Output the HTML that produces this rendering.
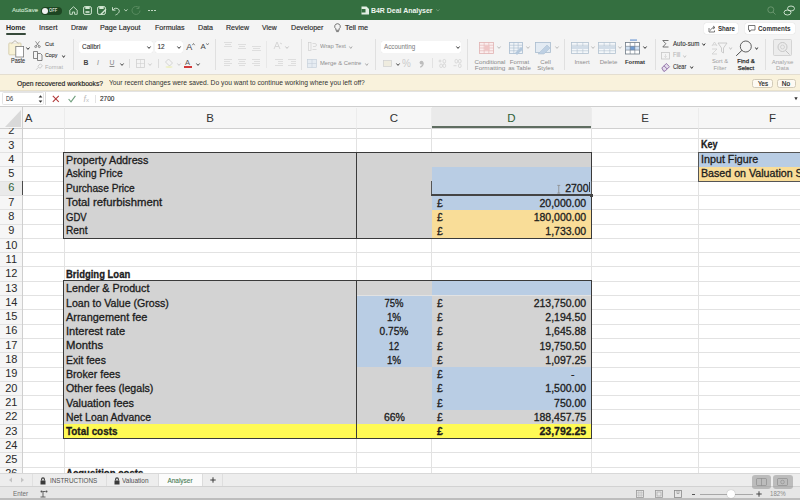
<!DOCTYPE html><html><head><meta charset="utf-8"><style>
*{margin:0;padding:0;box-sizing:border-box}
html,body{width:800px;height:500px;overflow:hidden}
body{position:relative;font-family:"Liberation Sans",sans-serif;background:#fff}
.a{position:absolute;white-space:nowrap}
svg.a{overflow:visible}
</style></head><body>
<div class="a" style="left:0.00px;top:106.00px;width:800.00px;height:394.00px;background:#fff;"></div>
<div class="a" style="left:0.00px;top:106.00px;width:800.00px;height:22.00px;background:#f6f6f6;"></div>
<div class="a" style="left:0.00px;top:128.00px;width:22.00px;height:345.00px;background:#f6f6f6;"></div>
<div class="a" style="left:431.60px;top:106.50px;width:159.60px;height:21.50px;background:#eaeaea;"></div>
<div class="a" style="left:431.60px;top:126.20px;width:159.60px;height:1.80px;background:#5f6d61;"></div>
<div class="a" style="left:0.00px;top:181.10px;width:22.00px;height:14.30px;background:#eaeaea;"></div>
<div class="a" style="left:0.00px;top:137.70px;width:800.00px;height:1.00px;background:#e2e2e2;"></div>
<div class="a" style="left:0.00px;top:152.00px;width:800.00px;height:1.00px;background:#e2e2e2;"></div>
<div class="a" style="left:0.00px;top:166.30px;width:800.00px;height:1.00px;background:#e2e2e2;"></div>
<div class="a" style="left:0.00px;top:180.60px;width:800.00px;height:1.00px;background:#e2e2e2;"></div>
<div class="a" style="left:0.00px;top:194.90px;width:800.00px;height:1.00px;background:#e2e2e2;"></div>
<div class="a" style="left:0.00px;top:209.20px;width:800.00px;height:1.00px;background:#e2e2e2;"></div>
<div class="a" style="left:0.00px;top:223.50px;width:800.00px;height:1.00px;background:#e2e2e2;"></div>
<div class="a" style="left:0.00px;top:237.80px;width:800.00px;height:1.00px;background:#e2e2e2;"></div>
<div class="a" style="left:0.00px;top:252.10px;width:800.00px;height:1.00px;background:#e2e2e2;"></div>
<div class="a" style="left:0.00px;top:266.40px;width:800.00px;height:1.00px;background:#e2e2e2;"></div>
<div class="a" style="left:0.00px;top:280.70px;width:800.00px;height:1.00px;background:#e2e2e2;"></div>
<div class="a" style="left:0.00px;top:295.00px;width:800.00px;height:1.00px;background:#e2e2e2;"></div>
<div class="a" style="left:0.00px;top:309.30px;width:800.00px;height:1.00px;background:#e2e2e2;"></div>
<div class="a" style="left:0.00px;top:323.60px;width:800.00px;height:1.00px;background:#e2e2e2;"></div>
<div class="a" style="left:0.00px;top:337.90px;width:800.00px;height:1.00px;background:#e2e2e2;"></div>
<div class="a" style="left:0.00px;top:352.20px;width:800.00px;height:1.00px;background:#e2e2e2;"></div>
<div class="a" style="left:0.00px;top:366.50px;width:800.00px;height:1.00px;background:#e2e2e2;"></div>
<div class="a" style="left:0.00px;top:380.80px;width:800.00px;height:1.00px;background:#e2e2e2;"></div>
<div class="a" style="left:0.00px;top:395.10px;width:800.00px;height:1.00px;background:#e2e2e2;"></div>
<div class="a" style="left:0.00px;top:409.40px;width:800.00px;height:1.00px;background:#e2e2e2;"></div>
<div class="a" style="left:0.00px;top:423.70px;width:800.00px;height:1.00px;background:#e2e2e2;"></div>
<div class="a" style="left:0.00px;top:438.00px;width:800.00px;height:1.00px;background:#e2e2e2;"></div>
<div class="a" style="left:0.00px;top:452.30px;width:800.00px;height:1.00px;background:#e2e2e2;"></div>
<div class="a" style="left:0.00px;top:466.60px;width:800.00px;height:1.00px;background:#e2e2e2;"></div>
<div class="a" style="left:0.00px;top:127.50px;width:800.00px;height:1.00px;background:#d0d0d0;"></div>
<div class="a" style="left:63.50px;top:128.00px;width:1.00px;height:345.00px;background:#e2e2e2;"></div>
<div class="a" style="left:63.50px;top:108.00px;width:1.00px;height:20.00px;background:#ececec;"></div>
<div class="a" style="left:355.90px;top:128.00px;width:1.00px;height:345.00px;background:#e2e2e2;"></div>
<div class="a" style="left:355.90px;top:108.00px;width:1.00px;height:20.00px;background:#ececec;"></div>
<div class="a" style="left:431.10px;top:128.00px;width:1.00px;height:345.00px;background:#e2e2e2;"></div>
<div class="a" style="left:431.10px;top:108.00px;width:1.00px;height:20.00px;background:#ececec;"></div>
<div class="a" style="left:590.70px;top:128.00px;width:1.00px;height:345.00px;background:#e2e2e2;"></div>
<div class="a" style="left:590.70px;top:108.00px;width:1.00px;height:20.00px;background:#ececec;"></div>
<div class="a" style="left:698.30px;top:128.00px;width:1.00px;height:345.00px;background:#e2e2e2;"></div>
<div class="a" style="left:698.30px;top:108.00px;width:1.00px;height:20.00px;background:#ececec;"></div>
<div class="a" style="left:21.50px;top:106.00px;width:1.00px;height:367.00px;background:#cfcfcf;"></div>
<div class="a" style="left:21.50px;top:181.10px;width:1.50px;height:14.30px;background:#4a4a4a;"></div>
<svg class="a" style="left:0px;top:106px;" width="22" height="22" viewBox="0 0 22 22"><polygon points="5,21 21,21 21,4" fill="#d6d6d6"/></svg>
<div class="a" style="left:-171.50px;width:400px;text-align:center;top:112.67px;font-size:11.5px;line-height:11.5px;font-weight:400;color:#333;">A</div>
<div class="a" style="left:10.20px;width:400px;text-align:center;top:112.67px;font-size:11.5px;line-height:11.5px;font-weight:400;color:#333;">B</div>
<div class="a" style="left:194.00px;width:400px;text-align:center;top:112.67px;font-size:11.5px;line-height:11.5px;font-weight:400;color:#333;">C</div>
<div class="a" style="left:311.40px;width:400px;text-align:center;top:112.67px;font-size:11.5px;line-height:11.5px;font-weight:400;color:#2f5f37;">D</div>
<div class="a" style="left:445.00px;width:400px;text-align:center;top:112.67px;font-size:11.5px;line-height:11.5px;font-weight:400;color:#333;">E</div>
<div class="a" style="left:572.50px;width:400px;text-align:center;top:112.67px;font-size:11.5px;line-height:11.5px;font-weight:400;color:#333;">F</div>
<div class="a" style="left:-188.70px;width:400px;text-align:center;top:125.29px;font-size:11px;line-height:11px;font-weight:400;color:#2a2a2a;">2</div>
<div class="a" style="left:-188.70px;width:400px;text-align:center;top:139.59px;font-size:11px;line-height:11px;font-weight:400;color:#2a2a2a;">3</div>
<div class="a" style="left:-188.70px;width:400px;text-align:center;top:153.89px;font-size:11px;line-height:11px;font-weight:400;color:#2a2a2a;">4</div>
<div class="a" style="left:-188.70px;width:400px;text-align:center;top:168.19px;font-size:11px;line-height:11px;font-weight:400;color:#2a2a2a;">5</div>
<div class="a" style="left:-188.70px;width:400px;text-align:center;top:182.49px;font-size:11px;line-height:11px;font-weight:400;color:#2f5f37;">6</div>
<div class="a" style="left:-188.70px;width:400px;text-align:center;top:196.79px;font-size:11px;line-height:11px;font-weight:400;color:#2a2a2a;">7</div>
<div class="a" style="left:-188.70px;width:400px;text-align:center;top:211.09px;font-size:11px;line-height:11px;font-weight:400;color:#2a2a2a;">8</div>
<div class="a" style="left:-188.70px;width:400px;text-align:center;top:225.39px;font-size:11px;line-height:11px;font-weight:400;color:#2a2a2a;">9</div>
<div class="a" style="left:-188.70px;width:400px;text-align:center;top:239.69px;font-size:11px;line-height:11px;font-weight:400;color:#2a2a2a;">10</div>
<div class="a" style="left:-188.70px;width:400px;text-align:center;top:253.99px;font-size:11px;line-height:11px;font-weight:400;color:#2a2a2a;">11</div>
<div class="a" style="left:-188.70px;width:400px;text-align:center;top:268.29px;font-size:11px;line-height:11px;font-weight:400;color:#2a2a2a;">12</div>
<div class="a" style="left:-188.70px;width:400px;text-align:center;top:282.59px;font-size:11px;line-height:11px;font-weight:400;color:#2a2a2a;">13</div>
<div class="a" style="left:-188.70px;width:400px;text-align:center;top:296.89px;font-size:11px;line-height:11px;font-weight:400;color:#2a2a2a;">14</div>
<div class="a" style="left:-188.70px;width:400px;text-align:center;top:311.19px;font-size:11px;line-height:11px;font-weight:400;color:#2a2a2a;">15</div>
<div class="a" style="left:-188.70px;width:400px;text-align:center;top:325.49px;font-size:11px;line-height:11px;font-weight:400;color:#2a2a2a;">16</div>
<div class="a" style="left:-188.70px;width:400px;text-align:center;top:339.79px;font-size:11px;line-height:11px;font-weight:400;color:#2a2a2a;">17</div>
<div class="a" style="left:-188.70px;width:400px;text-align:center;top:354.09px;font-size:11px;line-height:11px;font-weight:400;color:#2a2a2a;">18</div>
<div class="a" style="left:-188.70px;width:400px;text-align:center;top:368.39px;font-size:11px;line-height:11px;font-weight:400;color:#2a2a2a;">19</div>
<div class="a" style="left:-188.70px;width:400px;text-align:center;top:382.69px;font-size:11px;line-height:11px;font-weight:400;color:#2a2a2a;">20</div>
<div class="a" style="left:-188.70px;width:400px;text-align:center;top:396.99px;font-size:11px;line-height:11px;font-weight:400;color:#2a2a2a;">21</div>
<div class="a" style="left:-188.70px;width:400px;text-align:center;top:411.29px;font-size:11px;line-height:11px;font-weight:400;color:#2a2a2a;">22</div>
<div class="a" style="left:-188.70px;width:400px;text-align:center;top:425.59px;font-size:11px;line-height:11px;font-weight:400;color:#2a2a2a;">23</div>
<div class="a" style="left:-188.70px;width:400px;text-align:center;top:439.89px;font-size:11px;line-height:11px;font-weight:400;color:#2a2a2a;">24</div>
<div class="a" style="left:-188.70px;width:400px;text-align:center;top:454.19px;font-size:11px;line-height:11px;font-weight:400;color:#2a2a2a;">25</div>
<div class="a" style="left:-188.70px;width:400px;text-align:center;top:468.49px;font-size:11px;line-height:11px;font-weight:400;color:#2a2a2a;">26</div>
<div class="a" style="left:0.00px;top:106.50px;width:21.50px;height:21.00px;background:#f6f6f6;"></div>
<svg class="a" style="left:0px;top:106px;" width="22" height="22" viewBox="0 0 22 22"><polygon points="5,21 21,21 21,4" fill="#d9d9d9"/></svg>
<div class="a" style="left:64.00px;top:152.50px;width:292.40px;height:85.80px;background:#d3d3d3;"></div>
<div class="a" style="left:356.40px;top:152.50px;width:75.20px;height:85.80px;background:#d3d3d3;"></div>
<div class="a" style="left:431.60px;top:152.50px;width:159.60px;height:14.30px;background:#d3d3d3;"></div>
<div class="a" style="left:431.60px;top:166.80px;width:159.60px;height:42.90px;background:#b9cde4;"></div>
<div class="a" style="left:431.60px;top:209.70px;width:159.60px;height:28.60px;background:#f9dd98;"></div>
<div class="a" style="left:64.00px;top:281.20px;width:292.40px;height:143.00px;background:#d3d3d3;"></div>
<div class="a" style="left:356.40px;top:281.20px;width:75.20px;height:14.30px;background:#d3d3d3;"></div>
<div class="a" style="left:356.40px;top:295.50px;width:75.20px;height:71.50px;background:#b9cde4;"></div>
<div class="a" style="left:356.40px;top:367.00px;width:75.20px;height:57.20px;background:#d3d3d3;"></div>
<div class="a" style="left:431.60px;top:281.20px;width:159.60px;height:14.30px;background:#b9cde4;"></div>
<div class="a" style="left:431.60px;top:295.50px;width:159.60px;height:71.50px;background:#d3d3d3;"></div>
<div class="a" style="left:431.60px;top:367.00px;width:159.60px;height:42.90px;background:#b9cde4;"></div>
<div class="a" style="left:431.60px;top:409.90px;width:159.60px;height:14.30px;background:#d3d3d3;"></div>
<div class="a" style="left:64.00px;top:424.20px;width:292.40px;height:14.30px;background:#fffa55;"></div>
<div class="a" style="left:356.40px;top:424.20px;width:75.20px;height:14.30px;background:#fffa55;"></div>
<div class="a" style="left:431.60px;top:424.20px;width:159.60px;height:14.30px;background:#fffa55;"></div>
<div class="a" style="left:698.80px;top:152.50px;width:101.20px;height:14.30px;background:#b9cde4;"></div>
<div class="a" style="left:698.80px;top:166.80px;width:101.20px;height:14.30px;background:#f9dd98;"></div>
<div class="a" style="left:63.25px;top:151.75px;width:528.70px;height:87.30px;border:1.5px solid #3a3a3a"></div>
<div class="a" style="left:355.65px;top:152.50px;width:1.50px;height:85.80px;background:#3a3a3a;"></div>
<div class="a" style="left:63.25px;top:280.45px;width:528.70px;height:158.80px;border:1.5px solid #3a3a3a"></div>
<div class="a" style="left:355.65px;top:281.20px;width:1.50px;height:157.30px;background:#3a3a3a;"></div>
<div class="a" style="left:698.20px;top:151.90px;width:122.40px;height:29.80px;border:1.2px solid #555"></div>
<div class="a" style="left:431.30px;top:181.10px;width:1.10px;height:14.30px;background:#555;"></div>
<div class="a" style="left:431.10px;top:194.40px;width:161.10px;height:2.00px;background:#444;"></div>
<div class="a" style="left:590.90px;top:181.10px;width:1.10px;height:14.30px;background:#555;"></div>
<div class="a" style="left:590.20px;top:194.40px;width:3.00px;height:3.00px;background:#444;"></div>
<div class="a" style="left:700.70px;top:138.51px;font-size:10.5px;line-height:10.5px;font-weight:700;color:#1c1c1c;transform:scaleX(0.8650);transform-origin:left;-webkit-text-stroke:0.3px #1c1c1c;">Key</div>
<div class="a" style="left:700.70px;top:154.31px;font-size:10.5px;line-height:10.5px;font-weight:400;color:#1c1c1c;transform:scaleX(1.0215);transform-origin:left;-webkit-text-stroke:0.3px #1c1c1c;">Input Figure</div>
<div class="a" style="left:700.70px;top:167.61px;font-size:10.5px;line-height:10.5px;font-weight:400;color:#1c1c1c;transform:scaleX(1.015);transform-origin:left;-webkit-text-stroke:0.3px #1c1c1c;">Based on Valuation Survey</div>
<div class="a" style="left:66.30px;top:154.81px;font-size:10.5px;line-height:10.5px;font-weight:400;color:#1c1c1c;transform:scaleX(1.0226);transform-origin:left;-webkit-text-stroke:0.3px #1c1c1c;">Property Address</div>
<div class="a" style="left:66.30px;top:167.71px;font-size:10.5px;line-height:10.5px;font-weight:400;color:#1c1c1c;transform:scaleX(0.9690);transform-origin:left;-webkit-text-stroke:0.3px #1c1c1c;">Asking Price</div>
<div class="a" style="left:66.30px;top:183.11px;font-size:10.5px;line-height:10.5px;font-weight:400;color:#1c1c1c;transform:scaleX(0.9655);transform-origin:left;-webkit-text-stroke:0.3px #1c1c1c;">Purchase Price</div>
<div class="a" style="left:66.30px;top:197.41px;font-size:10.5px;line-height:10.5px;font-weight:400;color:#1c1c1c;transform:scaleX(1.0764);transform-origin:left;-webkit-text-stroke:0.3px #1c1c1c;">Total refurbishment</div>
<div class="a" style="left:66.30px;top:211.71px;font-size:10.5px;line-height:10.5px;font-weight:400;color:#1c1c1c;transform:scaleX(0.9099);transform-origin:left;-webkit-text-stroke:0.3px #1c1c1c;">GDV</div>
<div class="a" style="left:66.30px;top:224.91px;font-size:10.5px;line-height:10.5px;font-weight:400;color:#1c1c1c;transform:scaleX(0.9703);transform-origin:left;-webkit-text-stroke:0.3px #1c1c1c;">Rent</div>
<div class="a" style="right:211.50px;top:183.11px;font-size:10.5px;line-height:10.5px;font-weight:400;color:#1c1c1c;-webkit-text-stroke:0.3px #1c1c1c;">2700</div>
<div class="a" style="left:588.60px;top:181.80px;width:0.90px;height:10.40px;background:#444;"></div>
<svg class="a" style="left:556.5px;top:185px;" width="3.5" height="8.5" viewBox="0 0 3.5 8.5"><path d="M0.3 0.4h2.9M1.75 0.4v7.7M0.3 8.1h2.9" stroke="#8a8a8a" stroke-width="0.8" fill="none"/></svg>
<div class="a" style="left:437.00px;top:197.51px;font-size:10.5px;line-height:10.5px;font-weight:400;color:#1c1c1c;-webkit-text-stroke:0.3px #1c1c1c;">£</div>
<div class="a" style="right:213.80px;top:197.51px;font-size:10.5px;line-height:10.5px;font-weight:400;color:#1c1c1c;-webkit-text-stroke:0.3px #1c1c1c;">20,000.00</div>
<div class="a" style="left:437.00px;top:211.81px;font-size:10.5px;line-height:10.5px;font-weight:400;color:#1c1c1c;-webkit-text-stroke:0.3px #1c1c1c;">£</div>
<div class="a" style="right:213.80px;top:211.81px;font-size:10.5px;line-height:10.5px;font-weight:400;color:#1c1c1c;-webkit-text-stroke:0.3px #1c1c1c;">180,000.00</div>
<div class="a" style="left:437.00px;top:226.11px;font-size:10.5px;line-height:10.5px;font-weight:400;color:#1c1c1c;-webkit-text-stroke:0.3px #1c1c1c;">£</div>
<div class="a" style="right:213.80px;top:226.11px;font-size:10.5px;line-height:10.5px;font-weight:400;color:#1c1c1c;-webkit-text-stroke:0.3px #1c1c1c;">1,733.00</div>
<div class="a" style="left:66.30px;top:268.91px;font-size:10.5px;line-height:10.5px;font-weight:700;color:#1c1c1c;transform:scaleX(0.9019);transform-origin:left;-webkit-text-stroke:0.3px #1c1c1c;">Bridging Loan</div>
<div class="a" style="left:66.30px;top:283.21px;font-size:10.5px;line-height:10.5px;font-weight:400;color:#1c1c1c;transform:scaleX(1.0208);transform-origin:left;-webkit-text-stroke:0.3px #1c1c1c;">Lender &amp; Product</div>
<div class="a" style="left:66.30px;top:297.51px;font-size:10.5px;line-height:10.5px;font-weight:400;color:#1c1c1c;transform:scaleX(1.0094);transform-origin:left;-webkit-text-stroke:0.3px #1c1c1c;">Loan to Value (Gross)</div>
<div class="a" style="left:194.40px;width:400px;text-align:center;top:297.61px;font-size:10.5px;line-height:10.5px;font-weight:400;color:#1c1c1c;transform:scaleX(0.9043);transform-origin:center;-webkit-text-stroke:0.3px #1c1c1c;">75%</div>
<div class="a" style="left:437.00px;top:297.61px;font-size:10.5px;line-height:10.5px;font-weight:400;color:#1c1c1c;-webkit-text-stroke:0.3px #1c1c1c;">£</div>
<div class="a" style="right:213.80px;top:297.61px;font-size:10.5px;line-height:10.5px;font-weight:400;color:#1c1c1c;-webkit-text-stroke:0.3px #1c1c1c;">213,750.00</div>
<div class="a" style="left:66.30px;top:311.81px;font-size:10.5px;line-height:10.5px;font-weight:400;color:#1c1c1c;transform:scaleX(1.0412);transform-origin:left;-webkit-text-stroke:0.3px #1c1c1c;">Arrangement fee</div>
<div class="a" style="left:194.40px;width:400px;text-align:center;top:311.91px;font-size:10.5px;line-height:10.5px;font-weight:400;color:#1c1c1c;transform:scaleX(0.9367);transform-origin:center;-webkit-text-stroke:0.3px #1c1c1c;">1%</div>
<div class="a" style="left:437.00px;top:311.91px;font-size:10.5px;line-height:10.5px;font-weight:400;color:#1c1c1c;-webkit-text-stroke:0.3px #1c1c1c;">£</div>
<div class="a" style="right:213.80px;top:311.91px;font-size:10.5px;line-height:10.5px;font-weight:400;color:#1c1c1c;-webkit-text-stroke:0.3px #1c1c1c;">2,194.50</div>
<div class="a" style="left:66.30px;top:326.11px;font-size:10.5px;line-height:10.5px;font-weight:400;color:#1c1c1c;transform:scaleX(1.0536);transform-origin:left;-webkit-text-stroke:0.3px #1c1c1c;">Interest rate</div>
<div class="a" style="left:194.40px;width:400px;text-align:center;top:326.21px;font-size:10.5px;line-height:10.5px;font-weight:400;color:#1c1c1c;transform:scaleX(0.9682);transform-origin:center;-webkit-text-stroke:0.3px #1c1c1c;">0.75%</div>
<div class="a" style="left:437.00px;top:326.21px;font-size:10.5px;line-height:10.5px;font-weight:400;color:#1c1c1c;-webkit-text-stroke:0.3px #1c1c1c;">£</div>
<div class="a" style="right:213.80px;top:326.21px;font-size:10.5px;line-height:10.5px;font-weight:400;color:#1c1c1c;-webkit-text-stroke:0.3px #1c1c1c;">1,645.88</div>
<div class="a" style="left:66.30px;top:340.41px;font-size:10.5px;line-height:10.5px;font-weight:400;color:#1c1c1c;transform:scaleX(1.0766);transform-origin:left;-webkit-text-stroke:0.3px #1c1c1c;">Months</div>
<div class="a" style="left:194.40px;width:400px;text-align:center;top:340.51px;font-size:10.5px;line-height:10.5px;font-weight:400;color:#1c1c1c;transform:scaleX(0.8784);transform-origin:center;-webkit-text-stroke:0.3px #1c1c1c;">12</div>
<div class="a" style="left:437.00px;top:340.51px;font-size:10.5px;line-height:10.5px;font-weight:400;color:#1c1c1c;-webkit-text-stroke:0.3px #1c1c1c;">£</div>
<div class="a" style="right:213.80px;top:340.51px;font-size:10.5px;line-height:10.5px;font-weight:400;color:#1c1c1c;-webkit-text-stroke:0.3px #1c1c1c;">19,750.50</div>
<div class="a" style="left:66.30px;top:354.71px;font-size:10.5px;line-height:10.5px;font-weight:400;color:#1c1c1c;transform:scaleX(0.9896);transform-origin:left;-webkit-text-stroke:0.3px #1c1c1c;">Exit fees</div>
<div class="a" style="left:194.40px;width:400px;text-align:center;top:354.81px;font-size:10.5px;line-height:10.5px;font-weight:400;color:#1c1c1c;transform:scaleX(0.9367);transform-origin:center;-webkit-text-stroke:0.3px #1c1c1c;">1%</div>
<div class="a" style="left:437.00px;top:354.81px;font-size:10.5px;line-height:10.5px;font-weight:400;color:#1c1c1c;-webkit-text-stroke:0.3px #1c1c1c;">£</div>
<div class="a" style="right:213.80px;top:354.81px;font-size:10.5px;line-height:10.5px;font-weight:400;color:#1c1c1c;-webkit-text-stroke:0.3px #1c1c1c;">1,097.25</div>
<div class="a" style="left:66.30px;top:369.01px;font-size:10.5px;line-height:10.5px;font-weight:400;color:#1c1c1c;transform:scaleX(1.0105);transform-origin:left;-webkit-text-stroke:0.3px #1c1c1c;">Broker fees</div>
<div class="a" style="left:437.00px;top:369.11px;font-size:10.5px;line-height:10.5px;font-weight:400;color:#1c1c1c;-webkit-text-stroke:0.3px #1c1c1c;">£</div>
<div class="a" style="right:225.50px;top:369.11px;font-size:10.5px;line-height:10.5px;font-weight:400;color:#1c1c1c;-webkit-text-stroke:0.3px #1c1c1c;">-</div>
<div class="a" style="left:66.30px;top:383.31px;font-size:10.5px;line-height:10.5px;font-weight:400;color:#1c1c1c;transform:scaleX(1.0120);transform-origin:left;-webkit-text-stroke:0.3px #1c1c1c;">Other fees (legals)</div>
<div class="a" style="left:437.00px;top:383.41px;font-size:10.5px;line-height:10.5px;font-weight:400;color:#1c1c1c;-webkit-text-stroke:0.3px #1c1c1c;">£</div>
<div class="a" style="right:213.80px;top:383.41px;font-size:10.5px;line-height:10.5px;font-weight:400;color:#1c1c1c;-webkit-text-stroke:0.3px #1c1c1c;">1,500.00</div>
<div class="a" style="left:66.30px;top:397.61px;font-size:10.5px;line-height:10.5px;font-weight:400;color:#1c1c1c;transform:scaleX(1.0348);transform-origin:left;-webkit-text-stroke:0.3px #1c1c1c;">Valuation fees</div>
<div class="a" style="left:437.00px;top:397.71px;font-size:10.5px;line-height:10.5px;font-weight:400;color:#1c1c1c;-webkit-text-stroke:0.3px #1c1c1c;">£</div>
<div class="a" style="right:213.80px;top:397.71px;font-size:10.5px;line-height:10.5px;font-weight:400;color:#1c1c1c;-webkit-text-stroke:0.3px #1c1c1c;">750.00</div>
<div class="a" style="left:66.30px;top:411.91px;font-size:10.5px;line-height:10.5px;font-weight:400;color:#1c1c1c;transform:scaleX(0.9913);transform-origin:left;-webkit-text-stroke:0.3px #1c1c1c;">Net Loan Advance</div>
<div class="a" style="left:194.40px;width:400px;text-align:center;top:412.01px;font-size:10.5px;line-height:10.5px;font-weight:400;color:#1c1c1c;-webkit-text-stroke:0.3px #1c1c1c;">66%</div>
<div class="a" style="left:437.00px;top:412.01px;font-size:10.5px;line-height:10.5px;font-weight:400;color:#1c1c1c;-webkit-text-stroke:0.3px #1c1c1c;">£</div>
<div class="a" style="right:213.80px;top:412.01px;font-size:10.5px;line-height:10.5px;font-weight:400;color:#1c1c1c;-webkit-text-stroke:0.3px #1c1c1c;">188,457.75</div>
<div class="a" style="left:66.30px;top:426.21px;font-size:10.5px;line-height:10.5px;font-weight:700;color:#1c1c1c;transform:scaleX(0.9415);transform-origin:left;-webkit-text-stroke:0.3px #1c1c1c;">Total costs</div>
<div class="a" style="left:437.00px;top:426.31px;font-size:10.5px;line-height:10.5px;font-weight:700;color:#1c1c1c;-webkit-text-stroke:0.3px #1c1c1c;">£</div>
<div class="a" style="right:213.80px;top:426.31px;font-size:10.5px;line-height:10.5px;font-weight:700;color:#1c1c1c;-webkit-text-stroke:0.3px #1c1c1c;">23,792.25</div>
<div class="a" style="left:66.30px;top:468.31px;font-size:10.5px;line-height:10.5px;font-weight:700;color:#1c1c1c;transform:scaleX(0.9132);transform-origin:left;-webkit-text-stroke:0.3px #1c1c1c;">Acqusition costs</div>
<div class="a" style="left:0.00px;top:473.00px;width:800.00px;height:13.80px;background:#ededed;"></div>
<div class="a" style="left:0.00px;top:473.00px;width:800.00px;height:0.70px;background:#d8d8d8;"></div>
<div class="a" style="left:0.00px;top:486.80px;width:800.00px;height:13.20px;background:#e6e6e6;"></div>
<div class="a" style="left:0.00px;top:486.30px;width:800.00px;height:0.90px;background:#d2d2d2;"></div>
<div class="a" style="left:0.00px;top:497.50px;width:800.00px;height:2.50px;background:#bdbdbd;"></div>
<svg class="a" style="left:8px;top:477px;" width="5" height="6" viewBox="0 0 5 6"><path d="M4 0.5L1 3l3 2.5z" fill="#c4c4c4"/></svg>
<svg class="a" style="left:19.5px;top:477px;" width="5" height="6" viewBox="0 0 5 6"><path d="M1 0.5L4 3 1 5.5z" fill="#c4c4c4"/></svg>
<div class="a" style="left:32.00px;top:474.00px;width:0.80px;height:12.00px;background:#e0e0e0;"></div>
<svg class="a" style="left:39.5px;top:476.5px;" width="6" height="8" viewBox="0 0 6 8"><path d="M1.6 3.6V2.3a1.4 1.4 0 0 1 2.8 0V3.6" stroke="#3a3a3a" stroke-width="1.1" fill="none"/><rect x="0.5" y="3.5" width="5" height="4" fill="#3a3a3a"/></svg>
<div class="a" style="left:49.50px;top:477.67px;font-size:6.3px;line-height:6.3px;font-weight:400;color:#505050;transform:scaleX(0.9994);transform-origin:left;">INSTRUCTIONS</div>
<div class="a" style="left:106.00px;top:474.00px;width:0.80px;height:12.00px;background:#dedede;"></div>
<svg class="a" style="left:113.5px;top:476.5px;" width="6" height="8" viewBox="0 0 6 8"><path d="M1.6 3.6V2.3a1.4 1.4 0 0 1 2.8 0V3.6" stroke="#3a3a3a" stroke-width="1.1" fill="none"/><rect x="0.5" y="3.5" width="5" height="4" fill="#3a3a3a"/></svg>
<div class="a" style="left:122.00px;top:477.67px;font-size:6.3px;line-height:6.3px;font-weight:400;color:#505050;transform:scaleX(1.0271);transform-origin:left;">Valuation</div>
<div class="a" style="left:158.50px;top:473.50px;width:43.00px;height:12.50px;background:#fbfbfb;"></div>
<div class="a" style="left:157.50px;top:474.00px;width:0.80px;height:12.00px;background:#dcdcdc;"></div>
<div class="a" style="left:201.50px;top:474.00px;width:0.80px;height:12.00px;background:#dcdcdc;"></div>
<div class="a" style="left:-19.70px;width:400px;text-align:center;top:477.50px;font-size:6.5px;line-height:6.5px;font-weight:400;color:#4a7c54;transform:scaleX(0.9952);transform-origin:center;-webkit-text-stroke:0.1px #4a7c54;">Analyser</div>
<div class="a" style="left:221.80px;top:474.00px;width:0.80px;height:12.00px;background:#dedede;"></div>
<svg class="a" style="left:209.5px;top:476.5px;" width="6" height="6" viewBox="0 0 6 6"><path d="M3 0.3v5.4M0.3 3h5.4" stroke="#3a3a3a" stroke-width="1"/></svg>
<div class="a" style="left:13.00px;top:490.97px;font-size:6.3px;line-height:6.3px;font-weight:400;color:#6e6e6e;transform:scaleX(1.0031);transform-origin:left;">Enter</div>
<svg class="a" style="left:39.5px;top:489.5px;" width="8" height="8" viewBox="0 0 8 8"><circle cx="1.5" cy="1.5" r="1" fill="#555"/><circle cx="6.5" cy="1.5" r="1" fill="#555"/><path d="M2.5 1.5h3M3 1.5v5.5M0.5 7h5" stroke="#555" stroke-width="0.9" fill="none"/></svg>
<svg class="a" style="left:636px;top:489.5px;" width="8" height="8" viewBox="0 0 8 8"><rect x="0.5" y="0.5" width="7" height="7" fill="none" stroke="#9a9a9a" stroke-width="0.8"/><path d="M0.5 2.8h7M0.5 5.2h7M2.8 0.5v7M5.2 0.5v7" stroke="#b0b0b0" stroke-width="0.5"/></svg>
<svg class="a" style="left:655px;top:489.5px;" width="8" height="8" viewBox="0 0 8 8"><rect x="0.5" y="0.5" width="7" height="7" fill="none" stroke="#9a9a9a" stroke-width="0.8"/><rect x="2" y="2" width="4" height="4" fill="none" stroke="#a0a0a0" stroke-width="0.6"/></svg>
<svg class="a" style="left:674px;top:489.5px;" width="8" height="8" viewBox="0 0 8 8"><rect x="0.5" y="0.5" width="7" height="7" fill="none" stroke="#8a8a8a" stroke-width="0.8"/><path d="M3 0.5v3h2v-3" stroke="#8a8a8a" stroke-width="0.6" fill="none"/></svg>
<div class="a" style="left:691.50px;top:493.60px;width:3.50px;height:1.00px;background:#555;"></div>
<div class="a" style="left:700.00px;top:493.50px;width:53.00px;height:1.30px;background:#a8a8a8;"></div>
<div class="a" style="left:727px;top:490px;width:8px;height:8px;border-radius:50%;background:#fff;box-shadow:0 0 1px #999"></div>
<svg class="a" style="left:755.5px;top:491px;" width="6" height="6" viewBox="0 0 6 6"><path d="M3 0.3v5.4M0.3 3h5.4" stroke="#444" stroke-width="1"/></svg>
<div class="a" style="left:770.00px;top:490.67px;font-size:6.3px;line-height:6.3px;font-weight:400;color:#8a8a8a;transform:scaleX(0.9693);transform-origin:left;">182%</div>
<div class="a" style="left:751.50px;top:475.00px;width:19.50px;height:13.50px;background:rgba(140,140,140,0.5);border-radius:3px;"></div>
<div class="a" style="left:773.00px;top:475.00px;width:19.50px;height:13.50px;background:rgba(140,140,140,0.5);border-radius:3px;"></div>
<svg class="a" style="left:756px;top:478px;" width="11" height="8" viewBox="0 0 11 8"><rect x="0.5" y="0.5" width="10" height="7" rx="1" fill="none" stroke="rgba(120,120,120,0.6)" stroke-width="0.8"/><path d="M5.5 0.5v7" stroke="rgba(120,120,120,0.6)" stroke-width="0.8"/></svg>
<svg class="a" style="left:777px;top:478px;" width="11" height="8" viewBox="0 0 11 8"><rect x="0.5" y="0.5" width="10" height="7" rx="1" fill="none" stroke="rgba(120,120,120,0.6)" stroke-width="0.8"/><circle cx="5.5" cy="4" r="1.8" fill="none" stroke="rgba(120,120,120,0.6)" stroke-width="0.7"/></svg>
<div class="a" style="left:0.00px;top:90.80px;width:800.00px;height:15.20px;background:#fff;"></div>
<div class="a" style="left:0.00px;top:105.60px;width:800.00px;height:0.90px;background:#cfcfcf;"></div>
<div class="a" style="left:0.00px;top:90.80px;width:800.00px;height:0.60px;background:#e3e3e3;"></div>
<div class="a" style="left:44.60px;top:92.00px;width:0.80px;height:13.00px;background:#dadada;"></div>
<div class="a" style="left:1.5px;top:92px;width:42.5px;height:13px;border:0.8px solid #e4e4e4;border-radius:1.5px"></div>
<div class="a" style="left:6.00px;top:95.70px;font-size:6.5px;line-height:6.5px;font-weight:400;color:#333;transform:scaleX(0.8627);transform-origin:left;">D6</div>
<svg class="a" style="left:38px;top:94px;" width="5" height="10" viewBox="0 0 5 10"><path d="M0.6 3.4l1.9-2.2 1.9 2.2zM0.6 6.6l1.9 2.2 1.9-2.2z" fill="#333"/></svg>
<svg class="a" style="left:51.5px;top:95px;" width="8" height="8" viewBox="0 0 8 8"><path d="M0.8 0.8l6 6M6.8 0.8l-6 6" stroke="#b23a3a" stroke-width="1.1"/></svg>
<svg class="a" style="left:67.5px;top:95px;" width="8" height="8" viewBox="0 0 8 8"><path d="M0.6 4l2.4 2.8 4.4-6" stroke="#6f9f7d" stroke-width="1.1" fill="none"/></svg>
<div class="a" style="left:83.50px;top:94.80px;font-size:8.5px;line-height:8.5px;font-weight:400;color:#bdbdbd;font-family:"Liberation Serif",serif;"><i>f</i><span style="font-size:6px">x</span></div>
<div class="a" style="left:95.00px;top:94.50px;width:0.70px;height:8.50px;background:#e3e3e3;"></div>
<div class="a" style="left:99.80px;top:96.24px;font-size:6.8px;line-height:6.8px;font-weight:400;color:#222;transform:scaleX(0.9452);transform-origin:left;-webkit-text-stroke:0.1px #222;">2700</div>
<svg class="a" style="left:794px;top:97px;" width="4" height="3.5" viewBox="0 0 4 3.5"><path d="M0.3 0.3h3.4L2 3.2z" fill="#333"/></svg>
<div class="a" style="left:0.00px;top:74.50px;width:800.00px;height:16.30px;background:#f9f2dc;"></div>
<div class="a" style="left:0.00px;top:74.00px;width:800.00px;height:1.00px;background:#e4ded0;"></div>
<div class="a" style="left:0.00px;top:90.20px;width:800.00px;height:0.70px;background:#e8e1cc;"></div>
<div class="a" style="left:17.00px;top:80.50px;font-size:6.5px;line-height:6.5px;font-weight:400;color:#1e1e1e;transform:scaleX(1.0361);transform-origin:left;-webkit-text-stroke:0.15px #1e1e1e;">Open recovered workbooks?</div>
<div class="a" style="left:109.00px;top:80.29px;font-size:6.75px;line-height:6.75px;font-weight:400;color:#333;transform:scaleX(0.9980);transform-origin:left;">Your recent changes were saved. Do you want to continue working where you left off?</div>
<div class="a" style="left:752px;top:79px;width:21px;height:8.5px;border:0.8px solid #d2cbb8;border-radius:2.5px;background:#fdfaf3"></div>
<div class="a" style="left:562.50px;width:400px;text-align:center;top:80.54px;font-size:6.8px;line-height:6.8px;font-weight:400;color:#1e1e1e;transform:scaleX(0.8983);transform-origin:center;-webkit-text-stroke:0.2px #1e1e1e;">Yes</div>
<div class="a" style="left:777px;top:79px;width:18.5px;height:8.5px;border:0.8px solid #d2cbb8;border-radius:2.5px;background:#fdfaf3"></div>
<div class="a" style="left:586.30px;width:400px;text-align:center;top:80.54px;font-size:6.8px;line-height:6.8px;font-weight:400;color:#1e1e1e;transform:scaleX(0.9541);transform-origin:center;-webkit-text-stroke:0.2px #1e1e1e;">No</div>
<div class="a" style="left:0.00px;top:19.30px;width:800.00px;height:55.20px;background:#f4f4f4;"></div>
<div class="a" style="left:6.25px;top:24.21px;font-size:7.2px;line-height:7.2px;font-weight:700;color:#2a2a2a;transform:scaleX(0.9764);transform-origin:left;">Home</div>
<div class="a" style="left:38.50px;top:24.21px;font-size:7.2px;line-height:7.2px;font-weight:400;color:#2a2a2a;transform:scaleX(1.0290);transform-origin:left;-webkit-text-stroke:0.15px #2a2a2a;">Insert</div>
<div class="a" style="left:70.50px;top:24.21px;font-size:7.2px;line-height:7.2px;font-weight:400;color:#2a2a2a;transform:scaleX(0.9669);transform-origin:left;-webkit-text-stroke:0.15px #2a2a2a;">Draw</div>
<div class="a" style="left:100.00px;top:24.21px;font-size:7.2px;line-height:7.2px;font-weight:400;color:#2a2a2a;transform:scaleX(1.0033);transform-origin:left;-webkit-text-stroke:0.15px #2a2a2a;">Page Layout</div>
<div class="a" style="left:154.50px;top:24.21px;font-size:7.2px;line-height:7.2px;font-weight:400;color:#2a2a2a;transform:scaleX(0.9881);transform-origin:left;-webkit-text-stroke:0.15px #2a2a2a;">Formulas</div>
<div class="a" style="left:198.00px;top:24.21px;font-size:7.2px;line-height:7.2px;font-weight:400;color:#2a2a2a;transform:scaleX(0.9878);transform-origin:left;-webkit-text-stroke:0.15px #2a2a2a;">Data</div>
<div class="a" style="left:225.75px;top:24.21px;font-size:7.2px;line-height:7.2px;font-weight:400;color:#2a2a2a;transform:scaleX(0.9743);transform-origin:left;-webkit-text-stroke:0.15px #2a2a2a;">Review</div>
<div class="a" style="left:262.00px;top:24.21px;font-size:7.2px;line-height:7.2px;font-weight:400;color:#2a2a2a;transform:scaleX(0.9534);transform-origin:left;-webkit-text-stroke:0.15px #2a2a2a;">View</div>
<div class="a" style="left:291.00px;top:24.21px;font-size:7.2px;line-height:7.2px;font-weight:400;color:#2a2a2a;transform:scaleX(0.9890);transform-origin:left;-webkit-text-stroke:0.15px #2a2a2a;">Developer</div>
<div class="a" style="left:345.00px;top:24.21px;font-size:7.2px;line-height:7.2px;font-weight:400;color:#2a2a2a;transform:scaleX(1.0102);transform-origin:left;-webkit-text-stroke:0.15px #2a2a2a;">Tell me</div>
<div class="a" style="left:6.00px;top:33.30px;width:20.00px;height:1.70px;background:#36493a;border-radius:1px;"></div>
<svg class="a" style="left:334px;top:23px;" width="7" height="10" viewBox="0 0 7 10"><path d="M3.5 0.7a2.8 2.8 0 0 0-1.6 5.1v1.5h3.2V5.8A2.8 2.8 0 0 0 3.5 0.7z M2.2 8.6h2.6" stroke="#555" stroke-width="0.8" fill="none"/></svg>
<div class="a" style="left:704px;top:23px;width:34px;height:11px;background:#fff;border-radius:2px;box-shadow:0 0 0.8px #bbb"></div>
<svg class="a" style="left:708px;top:24.5px;" width="8" height="8" viewBox="0 0 8 8"><path d="M1 3v4h5.5V5.5" stroke="#555" stroke-width="0.8" fill="none"/><path d="M2.5 5.5c0.5-2 2-3 4-3M5 1l2 1.5-2 1.5" stroke="#555" stroke-width="0.8" fill="none"/></svg>
<div class="a" style="left:717.50px;top:26.17px;font-size:6.3px;line-height:6.3px;font-weight:700;color:#333;transform:scaleX(0.9723);transform-origin:left;">Share</div>
<div class="a" style="left:744.5px;top:23px;width:50px;height:11px;background:#fff;border-radius:2px;box-shadow:0 0 0.8px #bbb"></div>
<svg class="a" style="left:748px;top:25px;" width="8" height="8" viewBox="0 0 8 8"><path d="M0.5 0.5h6.5v4.5H3L1.5 7V5H0.5z" stroke="#555" stroke-width="0.8" fill="none"/></svg>
<div class="a" style="left:758.00px;top:26.17px;font-size:6.3px;line-height:6.3px;font-weight:700;color:#333;transform:scaleX(0.9989);transform-origin:left;">Comments</div>
<div class="a" style="left:72.50px;top:39.00px;width:1.00px;height:31.00px;background:#e0e0e0;"></div>
<div class="a" style="left:214.80px;top:39.00px;width:1.00px;height:31.00px;background:#e0e0e0;"></div>
<div class="a" style="left:301.00px;top:39.00px;width:1.00px;height:31.00px;background:#e0e0e0;"></div>
<div class="a" style="left:374.50px;top:39.00px;width:1.00px;height:31.00px;background:#e0e0e0;"></div>
<div class="a" style="left:467.00px;top:39.00px;width:1.00px;height:31.00px;background:#e0e0e0;"></div>
<div class="a" style="left:564.00px;top:39.00px;width:1.00px;height:31.00px;background:#e0e0e0;"></div>
<div class="a" style="left:655.00px;top:39.00px;width:1.00px;height:31.00px;background:#e0e0e0;"></div>
<div class="a" style="left:765.20px;top:39.00px;width:1.00px;height:31.00px;background:#e0e0e0;"></div>
<svg class="a" style="left:7px;top:39px;" width="20" height="20" viewBox="0 0 20 20"><rect x="1.8" y="4" width="12.2" height="11.8" rx="0.8" fill="#f8f2d6" stroke="#cfc6a6" stroke-width="0.8"/><path d="M4.6 4.6L8 1.6l3.4 3" stroke="#b9b3a3" stroke-width="0.9" fill="#f4f4f4"/><rect x="8.8" y="7.5" width="7.8" height="10.5" fill="#fff" stroke="#7a7a7a" stroke-width="0.8"/></svg>
<svg class="a" style="left:25.8px;top:47px;" width="3.9" height="3" viewBox="0 0 3.9 3"><path d="M0.4 0.5L1.95 2.4L3.5 0.5" stroke="#333" stroke-width="1" fill="none"/></svg>
<div class="a" style="left:11.00px;top:58.48px;font-size:6.4px;line-height:6.4px;font-weight:400;color:#333;transform:scaleX(0.8578);transform-origin:left;-webkit-text-stroke:0.1px #333;">Paste</div>
<svg class="a" style="left:34.3px;top:41px;" width="7" height="7" viewBox="0 0 7 7"><path d="M1.5 0.3l3.6 5M5.5 0.3l-3.6 5" stroke="#6a6a6a" stroke-width="0.7"/><circle cx="1.7" cy="5.6" r="1" fill="none" stroke="#6a6a6a" stroke-width="0.7"/><circle cx="5.3" cy="5.6" r="1" fill="none" stroke="#6a6a6a" stroke-width="0.7"/></svg>
<div class="a" style="left:45.00px;top:40.64px;font-size:6.1px;line-height:6.1px;font-weight:400;color:#333;transform:scaleX(0.9398);transform-origin:left;-webkit-text-stroke:0.1px #333;">Cut</div>
<svg class="a" style="left:33px;top:50.5px;" width="10" height="10" viewBox="0 0 10 10"><path d="M0.5 0.5h4v7h-4z" fill="none" stroke="#6a6a6a" stroke-width="0.8"/><path d="M4.5 2.5h3l1.5 1.5v5.5h-4.5z" fill="#f4f4f4" stroke="#6a6a6a" stroke-width="0.8"/></svg>
<div class="a" style="left:45.00px;top:52.24px;font-size:6.1px;line-height:6.1px;font-weight:400;color:#333;transform:scaleX(0.8696);transform-origin:left;-webkit-text-stroke:0.1px #333;">Copy</div>
<svg class="a" style="left:62.3px;top:54.5px;" width="3.2" height="3" viewBox="0 0 3.2 3"><path d="M0.4 0.5L1.6 2.4L2.8000000000000003 0.5" stroke="#333" stroke-width="1" fill="none"/></svg>
<svg class="a" style="left:34.5px;top:63px;" width="8" height="8" viewBox="0 0 8 8"><path d="M1 6.8l2.6-2.6M2.8 3.2l2.6-2.4 2 2-2.4 2.6z" stroke="#c8c8c8" stroke-width="0.9" fill="none"/></svg>
<div class="a" style="left:45.00px;top:63.64px;font-size:6.1px;line-height:6.1px;font-weight:400;color:#b2b2b2;transform:scaleX(0.9385);transform-origin:left;">Format</div>
<div class="a" style="left:79px;top:40.5px;width:74px;height:12.5px;background:#fff;border-radius:2px;box-shadow:0 0 0.6px #ccc"></div>
<div class="a" style="left:82.00px;top:44.00px;font-size:6.5px;line-height:6.5px;font-weight:400;color:#333;-webkit-text-stroke:0.1px #333;">Calibri</div>
<svg class="a" style="left:147px;top:46px;" width="4" height="3" viewBox="0 0 4 3"><path d="M0.4 0.5L2.0 2.4L3.6 0.5" stroke="#333" stroke-width="1" fill="none"/></svg>
<div class="a" style="left:155px;top:40.5px;width:27.5px;height:12.5px;background:#fff;border-radius:2px;box-shadow:0 0 0.6px #ccc"></div>
<div class="a" style="left:157.50px;top:44.00px;font-size:6.5px;line-height:6.5px;font-weight:400;color:#333;-webkit-text-stroke:0.1px #333;">12</div>
<svg class="a" style="left:176.5px;top:46px;" width="4" height="3" viewBox="0 0 4 3"><path d="M0.4 0.5L2.0 2.4L3.6 0.5" stroke="#333" stroke-width="1" fill="none"/></svg>
<div class="a" style="left:186.30px;top:42.88px;font-size:9px;line-height:9px;font-weight:400;color:#444;">A</div>
<svg class="a" style="left:192.3px;top:42.5px;" width="3" height="2.5" viewBox="0 0 3 2.5"><path d="M0.3 2.2L1.5 0.5L2.7 2.2" stroke="#555" stroke-width="0.7" fill="none"/></svg>
<div class="a" style="left:200.50px;top:43.40px;font-size:7.8px;line-height:7.8px;font-weight:400;color:#444;">A</div>
<svg class="a" style="left:206px;top:42.5px;" width="3" height="2.5" viewBox="0 0 3 2.5"><path d="M0.3 0.3L1.5 2L2.7 0.3" stroke="#555" stroke-width="0.7" fill="none"/></svg>
<div class="a" style="left:83.50px;top:60.24px;font-size:6.8px;line-height:6.8px;font-weight:700;color:#444;">B</div>
<div class="a" style="left:97.00px;top:60.24px;font-size:6.8px;line-height:6.8px;font-weight:400;color:#888;font-style:italic;">I</div>
<div class="a" style="left:109.50px;top:60.24px;font-size:6.8px;line-height:6.8px;font-weight:400;color:#888;text-decoration:underline;">U</div>
<svg class="a" style="left:120px;top:62.5px;" width="4" height="3" viewBox="0 0 4 3"><path d="M0.4 0.5L2.0 2.4L3.6 0.5" stroke="#444" stroke-width="1" fill="none"/></svg>
<div class="a" style="left:128.60px;top:59.00px;width:0.80px;height:9.00px;background:#dcdcdc;"></div>
<svg class="a" style="left:136px;top:59px;" width="9" height="9" viewBox="0 0 9 9"><rect x="0.5" y="0.5" width="8" height="8" fill="none" stroke="#d0d0d0" stroke-width="0.8"/><path d="M4.5 0.5v8M0.5 4.5h8" stroke="#d0d0d0" stroke-width="0.6"/></svg>
<svg class="a" style="left:148px;top:62.5px;" width="4" height="3" viewBox="0 0 4 3"><path d="M0.4 0.5L2.0 2.4L3.6 0.5" stroke="#ccc" stroke-width="1" fill="none"/></svg>
<div class="a" style="left:157.60px;top:59.00px;width:0.80px;height:9.00px;background:#dcdcdc;"></div>
<svg class="a" style="left:164px;top:58px;" width="10" height="10" viewBox="0 0 10 10"><path d="M4.5 1l4 4-3 3-4-4z" stroke="#ccc" stroke-width="0.8" fill="none"/><ellipse cx="5" cy="9" rx="3.5" ry="1" fill="#eef0c8"/></svg>
<svg class="a" style="left:177px;top:62.5px;" width="4" height="3" viewBox="0 0 4 3"><path d="M0.4 0.5L2.0 2.4L3.6 0.5" stroke="#ccc" stroke-width="1" fill="none"/></svg>
<div class="a" style="left:185.00px;top:59.15px;font-size:7.5px;line-height:7.5px;font-weight:400;color:#555;">A</div>
<div class="a" style="left:184.20px;top:66.30px;width:8.30px;height:1.50px;background:#d23a3a;"></div>
<svg class="a" style="left:196px;top:62.5px;" width="4" height="3" viewBox="0 0 4 3"><path d="M0.4 0.5L2.0 2.4L3.6 0.5" stroke="#444" stroke-width="1" fill="none"/></svg>
<svg class="a" style="left:224px;top:42px;" width="12" height="8" viewBox="0 0 12 8"><rect x="0" y="0" width="8" height="0.8" fill="#d9d9d9"/><rect x="1" y="2" width="6" height="0.8" fill="#d9d9d9"/><rect x="0" y="4" width="8" height="0.8" fill="#d9d9d9"/></svg>
<svg class="a" style="left:238px;top:44px;" width="12" height="8" viewBox="0 0 12 8"><rect x="0" y="0" width="8" height="0.8" fill="#d9d9d9"/><rect x="1" y="2" width="6" height="0.8" fill="#d9d9d9"/><rect x="0" y="4" width="8" height="0.8" fill="#d9d9d9"/></svg>
<svg class="a" style="left:252px;top:46px;" width="12" height="8" viewBox="0 0 12 8"><rect x="0" y="0" width="9" height="0.8" fill="#d9d9d9"/><rect x="1" y="2" width="7" height="0.8" fill="#d9d9d9"/><rect x="0" y="4" width="9" height="0.8" fill="#d9d9d9"/></svg>
<svg class="a" style="left:224px;top:59px;" width="12" height="8" viewBox="0 0 12 8"><rect x="0" y="0" width="8" height="0.8" fill="#d9d9d9"/><rect x="0" y="2" width="6" height="0.8" fill="#d9d9d9"/><rect x="0" y="4" width="8" height="0.8" fill="#d9d9d9"/><rect x="0" y="6" width="6" height="0.8" fill="#d9d9d9"/></svg>
<svg class="a" style="left:238px;top:59px;" width="12" height="8" viewBox="0 0 12 8"><rect x="0" y="0" width="8" height="0.8" fill="#d9d9d9"/><rect x="1" y="2" width="6" height="0.8" fill="#d9d9d9"/><rect x="0" y="4" width="8" height="0.8" fill="#d9d9d9"/><rect x="1" y="6" width="6" height="0.8" fill="#d9d9d9"/></svg>
<svg class="a" style="left:252px;top:59px;" width="12" height="8" viewBox="0 0 12 8"><rect x="0" y="0" width="8" height="0.8" fill="#d9d9d9"/><rect x="2" y="2" width="6" height="0.8" fill="#d9d9d9"/><rect x="0" y="4" width="8" height="0.8" fill="#d9d9d9"/><rect x="2" y="6" width="6" height="0.8" fill="#d9d9d9"/></svg>
<div class="a" style="left:266.00px;top:41.00px;width:0.80px;height:27.00px;background:#e8e8e8;"></div>
<svg class="a" style="left:273px;top:41px;" width="10" height="9" viewBox="0 0 10 9"><path d="M1 8l3-7 3 7M2.2 5.5h3.6M7 2l2 1" stroke="#cfcfcf" stroke-width="0.8" fill="none"/></svg>
<svg class="a" style="left:284.5px;top:46px;" width="4" height="3" viewBox="0 0 4 3"><path d="M0.4 0.5L2.0 2.4L3.6 0.5" stroke="#c4c4c4" stroke-width="1" fill="none"/></svg>
<svg class="a" style="left:275px;top:59px;" width="12" height="8" viewBox="0 0 12 8"><rect x="0" y="0" width="8" height="0.8" fill="#d9d9d9"/><rect x="3" y="2" width="5" height="0.8" fill="#d9d9d9"/><rect x="3" y="4" width="5" height="0.8" fill="#d9d9d9"/><rect x="0" y="6" width="8" height="0.8" fill="#d9d9d9"/></svg>
<svg class="a" style="left:288px;top:59px;" width="12" height="8" viewBox="0 0 12 8"><rect x="0" y="0" width="8" height="0.8" fill="#d9d9d9"/><rect x="3" y="2" width="5" height="0.8" fill="#d9d9d9"/><rect x="3" y="4" width="5" height="0.8" fill="#d9d9d9"/><rect x="0" y="6" width="8" height="0.8" fill="#d9d9d9"/></svg>
<svg class="a" style="left:308px;top:42px;" width="9" height="9" viewBox="0 0 9 9"><rect x="0.5" y="0.5" width="2.5" height="8" fill="none" stroke="#d0d0d0" stroke-width="0.7"/><path d="M4.5 1.5h2.5a1.5 1.5 0 0 1 0 3H5" stroke="#d0d0d0" stroke-width="0.7" fill="none"/><path d="M4.5 7.5h4" stroke="#d0d0d0" stroke-width="0.7"/></svg>
<div class="a" style="left:319.60px;top:44.01px;font-size:5.9px;line-height:5.9px;font-weight:400;color:#8e8e8e;transform:scaleX(0.9862);transform-origin:left;">Wrap Text</div>
<svg class="a" style="left:348.5px;top:46px;" width="3.5" height="3" viewBox="0 0 3.5 3"><path d="M0.4 0.5L1.75 2.4L3.1 0.5" stroke="#aaa" stroke-width="1" fill="none"/></svg>
<svg class="a" style="left:307px;top:59px;" width="10" height="9" viewBox="0 0 10 9"><rect x="0.5" y="0.5" width="9" height="8" fill="#e6ecf2" stroke="#c6d0da" stroke-width="0.7"/><path d="M0.5 4.5h9M5 0.5v8" stroke="#c6d0da" stroke-width="0.6"/></svg>
<div class="a" style="left:320.00px;top:61.01px;font-size:5.9px;line-height:5.9px;font-weight:400;color:#8e8e8e;transform:scaleX(0.9928);transform-origin:left;">Merge &amp; Centre</div>
<svg class="a" style="left:365px;top:62.5px;" width="3.5" height="3" viewBox="0 0 3.5 3"><path d="M0.4 0.5L1.75 2.4L3.1 0.5" stroke="#aaa" stroke-width="1" fill="none"/></svg>
<div class="a" style="left:381px;top:41px;width:80px;height:11.5px;background:#fff;border-radius:2px;box-shadow:0 0 0.6px #ccc"></div>
<div class="a" style="left:384.00px;top:43.97px;font-size:6.3px;line-height:6.3px;font-weight:400;color:#7a7a7a;">Accounting</div>
<svg class="a" style="left:456px;top:46px;" width="4" height="3" viewBox="0 0 4 3"><path d="M0.4 0.5L2.0 2.4L3.6 0.5" stroke="#333" stroke-width="1" fill="none"/></svg>
<svg class="a" style="left:383px;top:59.5px;" width="9" height="7" viewBox="0 0 9 7"><rect x="0.5" y="0.5" width="8" height="6" fill="#efecdf" stroke="#cfcfcf" stroke-width="0.7"/></svg>
<svg class="a" style="left:395.5px;top:62.5px;" width="4" height="3" viewBox="0 0 4 3"><path d="M0.4 0.5L2.0 2.4L3.6 0.5" stroke="#444" stroke-width="1" fill="none"/></svg>
<div class="a" style="left:402.30px;top:58.41px;font-size:10.5px;line-height:10.5px;font-weight:400;color:#cbcbcb;transform:scaleX(0.9444);transform-origin:left;">%</div>
<svg class="a" style="left:418.5px;top:59.5px;" width="5" height="8" viewBox="0 0 5 8"><circle cx="2.5" cy="2.6" r="1.9" fill="#bdbdbd"/><path d="M4.2 2.8C4.3 5 3.2 6.5 1.2 7.3" stroke="#bdbdbd" stroke-width="1.2" fill="none"/></svg>
<div class="a" style="left:431.60px;top:58.00px;width:0.80px;height:10.00px;background:#e2e2e2;"></div>
<svg class="a" style="left:438px;top:58.5px;" width="9" height="9" viewBox="0 0 9 9"><path d="M0.5 2h3M2 0.5v3" stroke="#cfcfcf" stroke-width="0.7"/><rect x="5" y="0.5" width="2.6" height="3.5" rx="1.2" fill="none" stroke="#cfcfcf" stroke-width="0.7"/><rect x="5" y="5" width="2.6" height="3.5" rx="1.2" fill="none" stroke="#cfcfcf" stroke-width="0.7"/><rect x="1.8" y="5" width="2.6" height="3.5" rx="1.2" fill="none" stroke="#cfcfcf" stroke-width="0.7"/></svg>
<svg class="a" style="left:452.5px;top:58.5px;" width="9" height="9" viewBox="0 0 9 9"><rect x="2" y="0.5" width="2.6" height="3.5" rx="1.2" fill="none" stroke="#cfcfcf" stroke-width="0.7"/><rect x="5.5" y="0.5" width="2.6" height="3.5" rx="1.2" fill="none" stroke="#cfcfcf" stroke-width="0.7"/><rect x="5.5" y="5" width="2.6" height="3.5" rx="1.2" fill="none" stroke="#cfcfcf" stroke-width="0.7"/><path d="M0.5 6.7h3" stroke="#cfcfcf" stroke-width="0.7"/></svg>
<svg class="a" style="left:479px;top:41.5px;" width="15" height="12" viewBox="0 0 15 12"><rect x="0.5" y="0.5" width="14" height="11" fill="#fbeeee" stroke="#e0b2b2" stroke-width="0.8"/><path d="M0.5 3.25h14" stroke="#e0b2b2" stroke-width="0.6"/><path d="M0.5 6.0h14" stroke="#e0b2b2" stroke-width="0.6"/><path d="M0.5 8.75h14" stroke="#e0b2b2" stroke-width="0.6"/><path d="M5.166666666666667 0.5v11M9.833333333333334 0.5v11" stroke="#e0b2b2" stroke-width="0.6"/><rect x="5.5" y="3.5" width="5" height="5" fill="#efc6c6"/></svg>
<svg class="a" style="left:496.5px;top:46px;" width="4" height="3" viewBox="0 0 4 3"><path d="M0.4 0.5L2.0 2.4L3.6 0.5" stroke="#bbb" stroke-width="1" fill="none"/></svg>
<div class="a" style="left:289.50px;width:400px;text-align:center;top:58.54px;font-size:6.1px;line-height:6.1px;font-weight:400;color:#8a8a8a;transform:scaleX(1.0121);transform-origin:center;">Conditional</div>
<div class="a" style="left:289.50px;width:400px;text-align:center;top:65.04px;font-size:6.1px;line-height:6.1px;font-weight:400;color:#8a8a8a;transform:scaleX(1.0440);transform-origin:center;">Formatting</div>
<svg class="a" style="left:509px;top:41.5px;" width="14" height="12" viewBox="0 0 14 12"><rect x="0.5" y="0.5" width="13" height="11" fill="#f0f4f8" stroke="#a9bccf" stroke-width="0.8"/><path d="M0.5 3.25h13" stroke="#a9bccf" stroke-width="0.6"/><path d="M0.5 6.0h13" stroke="#a9bccf" stroke-width="0.6"/><path d="M0.5 8.75h13" stroke="#a9bccf" stroke-width="0.6"/><path d="M4.833333333333333 0.5v11M9.166666666666666 0.5v11" stroke="#a9bccf" stroke-width="0.6"/><path d="M6 11l6-6 2 2-6 6z" fill="#b4c8dc"/></svg>
<svg class="a" style="left:525.5px;top:46px;" width="4" height="3" viewBox="0 0 4 3"><path d="M0.4 0.5L2.0 2.4L3.6 0.5" stroke="#bbb" stroke-width="1" fill="none"/></svg>
<div class="a" style="left:319.50px;width:400px;text-align:center;top:58.54px;font-size:6.1px;line-height:6.1px;font-weight:400;color:#8a8a8a;">Format</div>
<div class="a" style="left:319.50px;width:400px;text-align:center;top:65.04px;font-size:6.1px;line-height:6.1px;font-weight:400;color:#8a8a8a;">as Table</div>
<svg class="a" style="left:535px;top:41.5px;" width="17" height="13" viewBox="0 0 17 13"><rect x="0.5" y="0.5" width="15" height="10" fill="#e3ebf3" stroke="#a9bccf" stroke-width="0.8"/><path d="M3 12l9-9 3 3-6 6z" fill="#bed0e3" stroke="#a9bccf" stroke-width="0.5"/></svg>
<svg class="a" style="left:554.5px;top:46px;" width="4" height="3" viewBox="0 0 4 3"><path d="M0.4 0.5L2.0 2.4L3.6 0.5" stroke="#bbb" stroke-width="1" fill="none"/></svg>
<div class="a" style="left:345.50px;width:400px;text-align:center;top:58.54px;font-size:6.1px;line-height:6.1px;font-weight:400;color:#8a8a8a;">Cell</div>
<div class="a" style="left:345.50px;width:400px;text-align:center;top:65.04px;font-size:6.1px;line-height:6.1px;font-weight:400;color:#8a8a8a;">Styles</div>
<svg class="a" style="left:571px;top:41.5px;" width="18" height="12" viewBox="0 0 18 12"><rect x="0.5" y="0.5" width="17" height="11" fill="#f4f7fa" stroke="#b2c1d0" stroke-width="0.8"/><path d="M0.5 3.25h17" stroke="#b2c1d0" stroke-width="0.6"/><path d="M0.5 6.0h17" stroke="#b2c1d0" stroke-width="0.6"/><path d="M0.5 8.75h17" stroke="#b2c1d0" stroke-width="0.6"/><path d="M6.166666666666667 0.5v11M11.833333333333334 0.5v11" stroke="#b2c1d0" stroke-width="0.6"/><rect x="1" y="4" width="16" height="3" fill="#d2dde8"/></svg>
<svg class="a" style="left:591px;top:46px;" width="4" height="3" viewBox="0 0 4 3"><path d="M0.4 0.5L2.0 2.4L3.6 0.5" stroke="#bbb" stroke-width="1" fill="none"/></svg>
<div class="a" style="left:382.00px;width:400px;text-align:center;top:58.54px;font-size:6.1px;line-height:6.1px;font-weight:400;color:#8e8e8e;">Insert</div>
<svg class="a" style="left:598px;top:41.5px;" width="18" height="12" viewBox="0 0 18 12"><rect x="0.5" y="0.5" width="17" height="11" fill="#f4f7fa" stroke="#b2c1d0" stroke-width="0.8"/><path d="M0.5 3.25h17" stroke="#b2c1d0" stroke-width="0.6"/><path d="M0.5 6.0h17" stroke="#b2c1d0" stroke-width="0.6"/><path d="M0.5 8.75h17" stroke="#b2c1d0" stroke-width="0.6"/><path d="M6.166666666666667 0.5v11M11.833333333333334 0.5v11" stroke="#b2c1d0" stroke-width="0.6"/><rect x="1" y="4" width="16" height="3" fill="#d2dde8"/></svg>
<svg class="a" style="left:618px;top:46px;" width="4" height="3" viewBox="0 0 4 3"><path d="M0.4 0.5L2.0 2.4L3.6 0.5" stroke="#bbb" stroke-width="1" fill="none"/></svg>
<div class="a" style="left:408.50px;width:400px;text-align:center;top:58.54px;font-size:6.1px;line-height:6.1px;font-weight:400;color:#8e8e8e;">Delete</div>
<svg class="a" style="left:625px;top:38.5px;" width="15" height="16" viewBox="0 0 15 16"><rect x="5" y="0.3" width="7" height="1.6" fill="#8fb0dc"/><rect x="0.5" y="3.5" width="14" height="11.5" fill="#fff" stroke="#6f7a86" stroke-width="0.8"/><rect x="0.9" y="7.3" width="13.2" height="3.8" fill="#cfe0f3"/><rect x="5.2" y="7.3" width="4.6" height="3.8" fill="#6f9bd3"/><path d="M0.5 7.3h14M0.5 11.1h14M5.2 3.5v11.5M9.8 3.5v11.5" stroke="#6f7a86" stroke-width="0.6"/></svg>
<svg class="a" style="left:643px;top:46px;" width="4" height="3" viewBox="0 0 4 3"><path d="M0.4 0.5L2.0 2.4L3.6 0.5" stroke="#333" stroke-width="1" fill="none"/></svg>
<div class="a" style="left:435.00px;width:400px;text-align:center;top:58.54px;font-size:6.1px;line-height:6.1px;font-weight:700;color:#333;transform:scaleX(0.9698);transform-origin:center;">Format</div>
<svg class="a" style="left:661.5px;top:40px;" width="7" height="7.5" viewBox="0 0 7 7.5"><path d="M6.5 0.5H0.8L3.8 3.7 0.8 7H6.5" stroke="#555" stroke-width="0.8" fill="none"/></svg>
<div class="a" style="left:673.00px;top:40.87px;font-size:6.3px;line-height:6.3px;font-weight:400;color:#333;transform:scaleX(0.9738);transform-origin:left;-webkit-text-stroke:0.1px #333;">Auto-sum</div>
<svg class="a" style="left:702px;top:42.6px;" width="3.6" height="3" viewBox="0 0 3.6 3"><path d="M0.4 0.5L1.8 2.4L3.2 0.5" stroke="#333" stroke-width="1" fill="none"/></svg>
<svg class="a" style="left:661px;top:51.5px;" width="9" height="7.5" viewBox="0 0 9 7.5"><rect x="0.5" y="0.5" width="8" height="6.5" fill="none" stroke="#c8c8c8" stroke-width="0.8"/><path d="M4.5 2v3.5M3.2 4.2l1.3 1.3 1.3-1.3" stroke="#cdcdcd" stroke-width="0.6" fill="none"/></svg>
<div class="a" style="left:673.00px;top:52.27px;font-size:6.3px;line-height:6.3px;font-weight:400;color:#b4b4b4;transform:scaleX(0.8895);transform-origin:left;-webkit-text-stroke:0.1px #b4b4b4;">Fill</div>
<svg class="a" style="left:683.2px;top:54.6px;" width="3.4" height="3" viewBox="0 0 3.4 3"><path d="M0.4 0.5L1.7 2.4L3.0 0.5" stroke="#c4c4c4" stroke-width="1" fill="none"/></svg>
<svg class="a" style="left:661px;top:62.5px;" width="9" height="8.5" viewBox="0 0 9 8.5"><path d="M0.8 5l4.5-4.5 3.2 3.2L4 8.2H2.6z" fill="#e4dcec" stroke="#8b6aa3" stroke-width="0.9"/><path d="M3 2.8l3.2 3.2" stroke="#8b6aa3" stroke-width="0.9"/></svg>
<div class="a" style="left:673.00px;top:63.67px;font-size:6.3px;line-height:6.3px;font-weight:400;color:#333;transform:scaleX(0.8829);transform-origin:left;-webkit-text-stroke:0.1px #333;">Clear</div>
<svg class="a" style="left:689.6px;top:66px;" width="3.4" height="3" viewBox="0 0 3.4 3"><path d="M0.4 0.5L1.7 2.4L3.0 0.5" stroke="#333" stroke-width="1" fill="none"/></svg>
<svg class="a" style="left:710px;top:41px;" width="22" height="14" viewBox="0 0 22 14"><path d="M2 5l2.5-4 2.5 4M2.8 3.8h3.4M2 8h5l-5 5h5" stroke="#cfcfcf" stroke-width="0.8" fill="none"/><path d="M8 2h9l-3.5 5v5l-2-1.3V7z" stroke="#c2c2c2" stroke-width="0.8" fill="none"/></svg>
<svg class="a" style="left:729px;top:47px;" width="3.2" height="3" viewBox="0 0 3.2 3"><path d="M0.4 0.5L1.6 2.4L2.8000000000000003 0.5" stroke="#c4c4c4" stroke-width="1" fill="none"/></svg>
<div class="a" style="left:520.20px;width:400px;text-align:center;top:58.44px;font-size:6.1px;line-height:6.1px;font-weight:400;color:#9e9e9e;transform:scaleX(0.9485);transform-origin:center;">Sort &amp;</div>
<div class="a" style="left:520.20px;width:400px;text-align:center;top:64.64px;font-size:6.1px;line-height:6.1px;font-weight:400;color:#9e9e9e;transform:scaleX(0.9473);transform-origin:center;">Filter</div>
<svg class="a" style="left:735px;top:39.5px;" width="17" height="17" viewBox="0 0 17 17"><circle cx="10.8" cy="6.5" r="5.5" fill="none" stroke="#3a3a3a" stroke-width="0.8"/><path d="M6.9 10.4L1.2 15.8" stroke="#3a3a3a" stroke-width="0.9"/></svg>
<svg class="a" style="left:755.3px;top:47px;" width="3.2" height="3" viewBox="0 0 3.2 3"><path d="M0.4 0.5L1.6 2.4L2.8000000000000003 0.5" stroke="#333" stroke-width="1" fill="none"/></svg>
<div class="a" style="left:546.40px;width:400px;text-align:center;top:58.44px;font-size:6.1px;line-height:6.1px;font-weight:400;color:#2e2e2e;transform:scaleX(0.9802);transform-origin:center;-webkit-text-stroke:0.25px #2e2e2e;">Find &amp;</div>
<div class="a" style="left:546.30px;width:400px;text-align:center;top:64.64px;font-size:6.1px;line-height:6.1px;font-weight:400;color:#2e2e2e;transform:scaleX(0.9627);transform-origin:center;-webkit-text-stroke:0.25px #2e2e2e;">Select</div>
<svg class="a" style="left:773px;top:39px;" width="19" height="17" viewBox="0 0 19 17"><rect x="0.5" y="0.5" width="18" height="16" rx="1" fill="#ececec" stroke="#cdcdcd" stroke-width="0.8"/><circle cx="9.5" cy="8" r="4.5" fill="none" stroke="#c2c2c2" stroke-width="0.9"/><circle cx="9.5" cy="8" r="2" fill="none" stroke="#c8c8c8" stroke-width="0.7"/><path d="M12.5 11.5l4 4" stroke="#c2c2c2" stroke-width="1"/></svg>
<div class="a" style="left:582.50px;width:400px;text-align:center;top:58.54px;font-size:6.1px;line-height:6.1px;font-weight:400;color:#a4a4a4;">Analyse</div>
<div class="a" style="left:582.50px;width:400px;text-align:center;top:65.04px;font-size:6.1px;line-height:6.1px;font-weight:400;color:#a4a4a4;">Data</div>
<div class="a" style="left:0.00px;top:0.00px;width:800.00px;height:19.50px;background:#346f40;"></div>
<div class="a" style="left:11.50px;top:7.25px;font-size:6.2px;line-height:6.2px;font-weight:400;color:#cde3cd;transform:scaleX(0.9675);transform-origin:left;-webkit-text-stroke:0.15px #cde3cd;">AutoSave</div>
<div class="a" style="left:40.5px;top:7px;width:21.5px;height:7.5px;border-radius:4px;background:#1d4622"></div>
<div class="a" style="left:41.5px;top:7.5px;width:6.3px;height:6.3px;border-radius:50%;background:#f2f2f2"></div>
<div class="a" style="left:49.30px;top:9.14px;font-size:4.8px;line-height:4.8px;font-weight:700;color:#d0dcd0;transform:scaleX(0.8487);transform-origin:left;">OFF</div>
<svg class="a" style="left:69px;top:6px;" width="9" height="9" viewBox="0 0 9 9"><path d="M0.8 4.2L4.5 0.8l3.7 3.4V8.3H5.6V6H3.4v2.3H0.8z" stroke="#d4e8d4" stroke-width="0.9" fill="none" stroke-linejoin="round"/></svg>
<svg class="a" style="left:83px;top:6px;" width="9" height="9" viewBox="0 0 9 9"><rect x="0.6" y="0.6" width="7.8" height="7.8" rx="1.5" stroke="#d4e8d4" stroke-width="1" fill="none"/><rect x="2.3" y="0.6" width="4.4" height="2.4" fill="#d4e8d4"/><rect x="2.5" y="5.2" width="4" height="1.6" fill="#d4e8d4"/></svg>
<svg class="a" style="left:97px;top:6px;" width="10" height="9" viewBox="0 0 10 9"><rect x="0.6" y="0.6" width="7.8" height="7.8" rx="1.5" stroke="#d4e8d4" stroke-width="1" fill="none"/><rect x="2.3" y="0.6" width="4.4" height="2.4" fill="#d4e8d4"/><path d="M4 8.3l5-5" stroke="#d4e8d4" stroke-width="1.5"/></svg>
<svg class="a" style="left:111px;top:5.5px;" width="10" height="10" viewBox="0 0 10 10"><path d="M1.5 1.2v3H4.5M1.8 4.1C3 2 6 1.6 7.6 3.3 9.3 5.2 7.6 7.8 4.5 9" stroke="#d4e8d4" stroke-width="0.9" fill="none"/></svg>
<svg class="a" style="left:124.3px;top:9px;" width="4" height="3" viewBox="0 0 4 3"><path d="M0.3 0.3l1.6 1.8 1.6-1.8" stroke="#d4e8d4" stroke-width="0.8" fill="none"/></svg>
<svg class="a" style="left:131px;top:5px;" width="11" height="11" viewBox="0 0 11 11"><path d="M9 5.5a4 4 0 1 1-1.2-2.9M8 1v2.5H5.5" stroke="#5b8d62" stroke-width="0.9" fill="none"/></svg>
<div class="a" style="left:148.3px;top:9.5px;width:1.5px;height:1.5px;border-radius:50%;background:#d4e8d4"></div>
<div class="a" style="left:151.20000000000002px;top:9.5px;width:1.5px;height:1.5px;border-radius:50%;background:#d4e8d4"></div>
<div class="a" style="left:154.10000000000002px;top:9.5px;width:1.5px;height:1.5px;border-radius:50%;background:#d4e8d4"></div>
<svg class="a" style="left:360.5px;top:5.8px;" width="9" height="9" viewBox="0 0 9 9"><path d="M0.5 0.5h5l2.5 2.5v5.5h-7.5z" fill="#e4efe4"/><rect x="0.5" y="3" width="4" height="3.5" fill="#346f40"/></svg>
<div class="a" style="left:370.70px;top:7.27px;font-size:7.0px;line-height:7.0px;font-weight:700;color:#eef5ee;transform:scaleX(0.9916);transform-origin:left;">B4R Deal Analyser</div>
<svg class="a" style="left:436px;top:9px;" width="4" height="3" viewBox="0 0 4 3"><path d="M0.3 0.3l1.6 1.8 1.6-1.8" stroke="#7fa485" stroke-width="0.7" fill="none"/></svg>
<svg class="a" style="left:767px;top:6px;" width="9" height="9" viewBox="0 0 9 9"><circle cx="3.8" cy="3.8" r="3" fill="none" stroke="#6d9872" stroke-width="0.9"/><path d="M6 6l2.5 2.5" stroke="#6d9872" stroke-width="0.9"/></svg>
<svg class="a" style="left:783px;top:4.5px;" width="13" height="11" viewBox="0 0 13 11"><ellipse cx="8" cy="3.5" rx="3.5" ry="2.5" fill="none" stroke="#d8ead8" stroke-width="0.9"/><ellipse cx="4.5" cy="7.5" rx="3.5" ry="2.5" fill="none" stroke="#d8ead8" stroke-width="0.9"/></svg>
</body></html>
